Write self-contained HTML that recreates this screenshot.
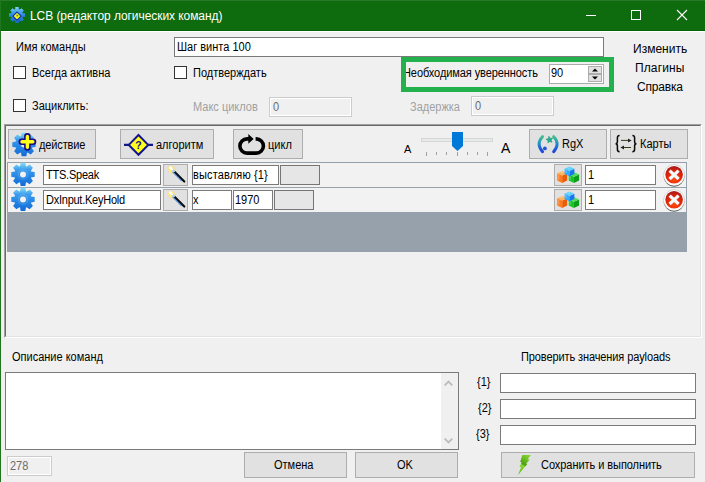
<!DOCTYPE html>
<html lang="ru">
<head>
<meta charset="utf-8">
<title>LCB (редактор логических команд)</title>
<style>
html,body{margin:0;padding:0;}
body{width:705px;height:482px;overflow:hidden;background:#f0f0f0;position:relative;
  font-family:"Liberation Sans",sans-serif;font-size:11px;line-height:13px;color:#000;}
.a{position:absolute;box-sizing:border-box;}
.t{position:absolute;white-space:nowrap;font-size:12px;line-height:12px;transform:scaleX(0.9167);transform-origin:0 0;}
.g{color:#a0a0a0;}
.s12{font-size:12px;line-height:14px;transform:none;}
.in{position:absolute;box-sizing:border-box;border:1px solid #7a7a7a;background:#fff;}
.dis{position:absolute;box-sizing:border-box;border:1px solid #ccc;background:#f0f0f0;box-shadow:inset 0 0 0 1px #fff;}
.btn{position:absolute;box-sizing:border-box;border:1px solid #adadad;background:#e1e1e1;}
.cb{position:absolute;box-sizing:border-box;width:13px;height:13px;border:1px solid #333;background:#fff;}
svg{position:absolute;overflow:visible;}
</style>
</head>
<body>
<!-- title bar -->
<div class="a" id="tb" style="left:0;top:0;width:705px;height:31px;background:#0e6b0e;border-top:1px solid #277a27;border-bottom:1px solid #056105;"></div>
<div class="a" style="left:0;top:31px;width:705px;height:1px;background:#fff;"></div>
<div class="a" style="left:0;top:0;width:1px;height:482px;background:#1f761f;"></div>
<div class="t s12" style="left:30px;top:9px;color:#fff;letter-spacing:-0.07px;">LCB (редактор логических команд)</div>
<!-- window buttons -->
<svg style="left:580px;top:5px" width="120" height="22" viewBox="580 5 120 22">
  <path d="M586 15.5H596" stroke="#fff" stroke-width="1" fill="none"/>
  <rect x="631.5" y="10.5" width="9" height="9" stroke="#fff" stroke-width="1" fill="none"/>
  <path d="M677 10L687 20M687 10L677 20" stroke="#fff" stroke-width="1.1" fill="none"/>
</svg>
<!-- app icon -->
<svg style="left:9px;top:7px" width="16" height="16" viewBox="-12 -12 24 24">
  <defs><linearGradient id="ga" gradientUnits="userSpaceOnUse" x1="0" y1="-12" x2="0" y2="12"><stop offset="0" stop-color="#7fd0f2"/><stop offset="0.45" stop-color="#2f8fe6"/><stop offset="1" stop-color="#1668d2"/></linearGradient></defs>
  <path d="M-2.80 -8.76L-2.50 -12.00L2.50 -12.00L2.80 -8.76A9.2 9.2 0 0 1 4.22 -8.18L6.72 -10.25L10.25 -6.72L8.18 -4.22A9.2 9.2 0 0 1 8.76 -2.80L12.00 -2.50L12.00 2.50L8.76 2.80A9.2 9.2 0 0 1 8.18 4.22L10.25 6.72L6.72 10.25L4.22 8.18A9.2 9.2 0 0 1 2.80 8.76L2.50 12.00L-2.50 12.00L-2.80 8.76A9.2 9.2 0 0 1 -4.22 8.18L-6.72 10.25L-10.25 6.72L-8.18 4.22A9.2 9.2 0 0 1 -8.76 2.80L-12.00 2.50L-12.00 -2.50L-8.76 -2.80A9.2 9.2 0 0 1 -8.18 -4.22L-10.25 -6.72L-6.72 -10.25L-4.22 -8.18A9.2 9.2 0 0 1 -2.80 -8.76Z" fill="url(#ga)"/>
  <path d="M0 -4.4L6.1 1.7L0 7.8L-6.1 1.7Z" fill="#f0ff14" stroke="#1a2a9c" stroke-width="1.6"/>
  <path d="M-1.2 0.6Q0 -0.8 1.2 0.6Q1.2 1.8 0 2.6" stroke="#3c4890" stroke-width="1.2" fill="none"/>
</svg>

<!-- top form -->
<div class="t" style="left:16px;top:41px;">Имя команды</div>
<div class="in" style="left:174px;top:37px;width:430px;height:20px;"></div>
<div class="t" style="left:177px;top:41px;">Шаг винта 100</div>

<div class="cb" style="left:13px;top:66px;"></div>
<div class="t" style="left:32px;top:67px;">Всегда активна</div>
<div class="cb" style="left:174px;top:66px;"></div>
<div class="t" style="left:193px;top:67px;">Подтверждать</div>

<div class="cb" style="left:13px;top:99px;"></div>
<div class="t" style="left:32px;top:100px;">Зациклить:</div>
<div class="t g" style="left:193px;top:101px;">Макс циклов</div>
<div class="dis" style="left:269px;top:97px;width:83px;height:20px;"></div>
<div class="t g" style="left:273px;top:101px;color:#6d6d6d;">0</div>
<div class="t g" style="left:410px;top:101px;">Задержка</div>
<div class="dis" style="left:471px;top:96px;width:83px;height:20px;"></div>
<div class="t g" style="left:475px;top:100px;color:#6d6d6d;">0</div>

<!-- confidence -->
<div class="t" style="left:403px;top:67px;letter-spacing:-0.087px;">Необходимая уверенность</div>
<div class="in" style="left:549px;top:64px;width:55px;height:20px;border-color:#ababab;"></div>
<div class="t" style="left:551px;top:67px;">90</div>
<div class="btn" style="left:588px;top:66px;width:14px;height:8px;"></div>
<div class="btn" style="left:588px;top:74px;width:14px;height:8px;"></div>
<svg style="left:588px;top:66px" width="15" height="16" viewBox="0 0 15 16"><path d="M4 5.6L7 2.4L10 5.6Z M4 10.4L7 13.6L10 10.4Z" fill="#000"/></svg>
<div class="a" style="left:401px;top:57px;width:213px;height:35px;border:5px solid #22b14c;"></div>

<div class="t s12" style="left:633px;top:42px;">Изменить</div>
<div class="t s12" style="left:635px;top:61px;letter-spacing:0.12px;">Плагины</div>
<div class="t s12" style="left:637px;top:80px;letter-spacing:-0.2px;">Справка</div>

<!-- main panel -->
<div class="a" style="left:4px;top:124px;width:698px;height:214px;border-top:1px solid #a0a0a0;border-left:1px solid #a0a0a0;border-right:1px solid #fff;border-bottom:1px solid #fff;"></div>
<div class="a" style="left:5px;top:125px;width:696px;height:212px;border-top:1px solid #696969;border-left:1px solid #696969;border-right:1px solid #e3e3e3;border-bottom:1px solid #e3e3e3;"></div>

<!-- toolbar buttons -->
<div class="btn" style="left:8px;top:129px;width:88px;height:30px;"></div>
<div class="t" style="left:39px;top:139px;letter-spacing:-0.15px;">действие</div>
<div class="btn" style="left:120px;top:129px;width:94px;height:30px;"></div>
<div class="t" style="left:156px;top:139px;">алгоритм</div>
<div class="btn" style="left:233px;top:129px;width:70px;height:30px;"></div>
<div class="t" style="left:268px;top:139px;">цикл</div>
<div class="btn" style="left:529px;top:129px;width:78px;height:30px;"></div>
<div class="t" style="left:562px;top:138px;">RgX</div>
<div class="btn" style="left:610px;top:129px;width:78px;height:30px;"></div>
<div class="t" style="left:640px;top:138px;">Карты</div>

<!-- slider -->
<div class="t" style="left:404px;top:143px;font-size:11px;transform:none;">A</div>
<div class="t" style="left:501px;top:140px;font-size:14px;line-height:16px;transform:none;">A</div>
<div class="a" style="left:421px;top:138px;width:72px;height:4px;border:1px solid #d6d6d6;background:#e7eaea;"></div>
<svg style="left:452px;top:132px" width="11" height="19" viewBox="0 0 11 19"><path d="M0 0H11V14L5.5 19L0 14Z" fill="#0078d7"/></svg>
<svg style="left:420px;top:152px" width="80" height="5" viewBox="420 152 80 5"><path d="M426.5 152v4M436.5 152v3M446.5 152v3M457.5 152v4M467.5 152v3M477.5 152v3M487.5 152v4" stroke="#a0a0a0" stroke-width="1" fill="none"/></svg>

<!-- rows area -->
<div class="a" style="left:7px;top:162px;width:680px;height:90px;background:#97a1ab;"></div>
<div class="a" style="left:8px;top:163px;width:678px;height:24px;background:#f2f2f2;"></div>
<div class="a" style="left:8px;top:188px;width:678px;height:24px;background:#f2f2f2;"></div>

<!-- row 1 -->
<div class="in" style="left:43px;top:165px;width:118px;height:20px;"></div>
<div class="t" style="left:46px;top:169px;letter-spacing:-0.25px;">TTS.Speak</div>
<div class="btn" style="left:163px;top:164px;width:25px;height:22px;"></div>
<div class="in" style="left:192px;top:165px;width:87px;height:20px;"></div>
<div class="t" style="left:193px;top:169px;letter-spacing:0.16px;">выставляю {1}</div>
<div class="btn" style="left:280px;top:165px;width:40px;height:20px;border-color:#767676;background:#e6e6e6;"></div>
<div class="btn" style="left:554px;top:164px;width:28px;height:22px;"></div>
<div class="in" style="left:585px;top:165px;width:71px;height:20px;"></div>
<div class="t" style="left:588px;top:169px;">1</div>

<!-- row 2 -->
<div class="in" style="left:43px;top:190px;width:118px;height:20px;"></div>
<div class="t" style="left:46px;top:194px;letter-spacing:-0.27px;">DxInput.KeyHold</div>
<div class="btn" style="left:163px;top:189px;width:25px;height:22px;"></div>
<div class="in" style="left:192px;top:190px;width:40px;height:20px;"></div>
<div class="t" style="left:193px;top:194px;">x</div>
<div class="in" style="left:233px;top:190px;width:40px;height:20px;"></div>
<div class="t" style="left:235px;top:194px;">1970</div>
<div class="btn" style="left:274px;top:190px;width:40px;height:20px;border-color:#767676;background:#e6e6e6;"></div>
<div class="btn" style="left:554px;top:189px;width:28px;height:22px;"></div>
<div class="in" style="left:585px;top:190px;width:71px;height:20px;"></div>
<div class="t" style="left:588px;top:194px;">1</div>

<!-- bottom -->
<div class="t" style="left:12px;top:351px;">Описание команд</div>
<div class="in" style="left:5px;top:372px;width:454px;height:78px;"></div>
<div class="a" style="left:441px;top:373px;width:17px;height:76px;background:#f0f0f0;"></div>
<svg style="left:441px;top:373px" width="17" height="76" viewBox="0 0 17 76"><path d="M3.7 12.4L7.5 8.6L11.3 12.4M3.7 65.6L7.5 69.4L11.3 65.6" stroke="#bdbdbd" stroke-width="1.9" fill="none"/></svg>
<div class="dis" style="left:7px;top:456px;width:45px;height:20px;"></div>
<div class="t" style="left:10px;top:460px;color:#6d6d6d;">278</div>
<div class="btn" style="left:244px;top:452px;width:103px;height:26px;"></div>
<div class="t" style="left:274px;top:459px;">Отмена</div>
<div class="btn" style="left:355px;top:452px;width:103px;height:26px;"></div>
<div class="t" style="left:397px;top:459px;">OK</div>

<div class="t" style="left:521px;top:351px;letter-spacing:-0.113px;">Проверить значения payloads</div>
<div class="t" style="left:477px;top:376px;">{1}</div>
<div class="in" style="left:500px;top:373px;width:196px;height:20px;"></div>
<div class="t" style="left:478px;top:402px;">{2}</div>
<div class="in" style="left:500px;top:399px;width:196px;height:20px;"></div>
<div class="t" style="left:476px;top:428px;">{3}</div>
<div class="in" style="left:500px;top:425px;width:196px;height:20px;"></div>
<div class="btn" style="left:501px;top:452px;width:194px;height:26px;"></div>
<div class="t" style="left:541px;top:459px;letter-spacing:-0.06px;">Сохранить и выполнить</div>

<!-- icons -->
<svg width="0" height="0" style="left:0;top:0"><defs>
<linearGradient id="gg" gradientUnits="userSpaceOnUse" x1="0" y1="-12" x2="0" y2="12"><stop offset="0" stop-color="#8be3f7"/><stop offset="0.3" stop-color="#3b9cec"/><stop offset="0.6" stop-color="#2485e4"/><stop offset="1" stop-color="#1269d6"/></linearGradient>
<linearGradient id="gp" gradientUnits="userSpaceOnUse" x1="0" y1="135" x2="0" y2="153"><stop offset="0" stop-color="#4cc878"/><stop offset="0.4" stop-color="#2a9ac0"/><stop offset="0.75" stop-color="#1f5fdc"/><stop offset="1" stop-color="#1a3fd0"/></linearGradient>
<radialGradient id="gr" cx="0.5" cy="0.75" r="0.75"><stop offset="0" stop-color="#ff4a10"/><stop offset="0.5" stop-color="#e82808"/><stop offset="1" stop-color="#a81818"/></radialGradient>
<radialGradient id="gw" cx="0.5" cy="0.5" r="0.5"><stop offset="0" stop-color="#fffad0"/><stop offset="0.4" stop-color="#fff250"/><stop offset="0.7" stop-color="#ffe468" stop-opacity="0.65"/><stop offset="1" stop-color="#ffb890" stop-opacity="0"/></radialGradient>
<linearGradient id="gl" x1="0.7" y1="0" x2="0.3" y2="1"><stop offset="0" stop-color="#82d232"/><stop offset="0.3" stop-color="#64b61e"/><stop offset="0.48" stop-color="#4c9c12"/><stop offset="0.58" stop-color="#86d630"/><stop offset="1" stop-color="#62bc1c"/></linearGradient>
</defs></svg>

<!-- action button icon: gear + plus -->
<svg style="left:0;top:0" width="705" height="482" viewBox="0 0 705 482">
  <g transform="translate(24 144.5)"><path d="M-3.00 -8.17L-2.30 -11.70L2.30 -11.70L3.00 -8.17A8.7 8.7 0 0 1 3.65 -7.90L6.65 -9.90L9.90 -6.65L7.90 -3.65A8.7 8.7 0 0 1 8.17 -3.00L11.70 -2.30L11.70 2.30L8.17 3.00A8.7 8.7 0 0 1 7.90 3.65L9.90 6.65L6.65 9.90L3.65 7.90A8.7 8.7 0 0 1 3.00 8.17L2.30 11.70L-2.30 11.70L-3.00 8.17A8.7 8.7 0 0 1 -3.65 7.90L-6.65 9.90L-9.90 6.65L-7.90 3.65A8.7 8.7 0 0 1 -8.17 3.00L-11.70 2.30L-11.70 -2.30L-8.17 -3.00A8.7 8.7 0 0 1 -7.90 -3.65L-9.90 -6.65L-6.65 -9.90L-3.65 -7.90A8.7 8.7 0 0 1 -3.00 -8.17ZM3.00 0A3.00 3.00 0 1 0 -3.00 0A3.00 3.00 0 1 0 3.00 0Z" fill="url(#gg)" fill-rule="evenodd"/></g>
  <path d="M27.4 136.2V147.4M21.8 141.8H33" stroke="#1c0c84" stroke-width="6.6" stroke-linecap="round" fill="none"/>
  <path d="M27.4 136.4V147.2M22 141.8H32.8" stroke="#ffff1a" stroke-width="3.4" stroke-linecap="round" fill="none"/>

  <!-- row gears -->
  <g transform="translate(23 174.4)"><path d="M-3.00 -8.17L-2.30 -11.70L2.30 -11.70L3.00 -8.17A8.7 8.7 0 0 1 3.65 -7.90L6.65 -9.90L9.90 -6.65L7.90 -3.65A8.7 8.7 0 0 1 8.17 -3.00L11.70 -2.30L11.70 2.30L8.17 3.00A8.7 8.7 0 0 1 7.90 3.65L9.90 6.65L6.65 9.90L3.65 7.90A8.7 8.7 0 0 1 3.00 8.17L2.30 11.70L-2.30 11.70L-3.00 8.17A8.7 8.7 0 0 1 -3.65 7.90L-6.65 9.90L-9.90 6.65L-7.90 3.65A8.7 8.7 0 0 1 -8.17 3.00L-11.70 2.30L-11.70 -2.30L-8.17 -3.00A8.7 8.7 0 0 1 -7.90 -3.65L-9.90 -6.65L-6.65 -9.90L-3.65 -7.90A8.7 8.7 0 0 1 -3.00 -8.17ZM3.00 0A3.00 3.00 0 1 0 -3.00 0A3.00 3.00 0 1 0 3.00 0Z" fill="url(#gg)" fill-rule="evenodd"/><circle r="4.6" fill="none" stroke="#fff" stroke-opacity="0.13" stroke-width="1.6"/></g>
  <g transform="translate(23 199.4)"><path d="M-3.00 -8.17L-2.30 -11.70L2.30 -11.70L3.00 -8.17A8.7 8.7 0 0 1 3.65 -7.90L6.65 -9.90L9.90 -6.65L7.90 -3.65A8.7 8.7 0 0 1 8.17 -3.00L11.70 -2.30L11.70 2.30L8.17 3.00A8.7 8.7 0 0 1 7.90 3.65L9.90 6.65L6.65 9.90L3.65 7.90A8.7 8.7 0 0 1 3.00 8.17L2.30 11.70L-2.30 11.70L-3.00 8.17A8.7 8.7 0 0 1 -3.65 7.90L-6.65 9.90L-9.90 6.65L-7.90 3.65A8.7 8.7 0 0 1 -8.17 3.00L-11.70 2.30L-11.70 -2.30L-8.17 -3.00A8.7 8.7 0 0 1 -7.90 -3.65L-9.90 -6.65L-6.65 -9.90L-3.65 -7.90A8.7 8.7 0 0 1 -3.00 -8.17ZM3.00 0A3.00 3.00 0 1 0 -3.00 0A3.00 3.00 0 1 0 3.00 0Z" fill="url(#gg)" fill-rule="evenodd"/><circle r="4.6" fill="none" stroke="#fff" stroke-opacity="0.13" stroke-width="1.6"/></g>

  <!-- algorithm icon -->
  <path d="M124 144.8H129M148 144.8H153" stroke="#14148c" stroke-width="2.2" fill="none"/>
  <path d="M138.5 135L148.2 144.9L138.5 154.8L128.8 144.9Z" fill="#ffff1e" stroke="#14148c" stroke-width="2"/>
  <text x="138.5" y="148.8" font-family="Liberation Sans, sans-serif" font-size="10.5" font-weight="bold" text-anchor="middle" fill="#14148c">?</text>

  <!-- loop icon -->
  <path d="M250 138.9H247A7.1 7.1 0 0 0 247 153.1H256.3A7.1 7.1 0 0 0 256.3 138.9H255.6" stroke="#000" stroke-width="3.6" fill="none"/>
  <path d="M248.3 134.1L253.6 138.9L248.3 143.7Z" fill="#000"/>

  <!-- RgX icon -->
  <path d="M542.6 136.6Q535.6 144.2 542.6 151.8" stroke="url(#gp)" stroke-width="2.9" fill="none" stroke-linecap="round"/>
  <path d="M553.6 136.6Q560.6 144.2 553.6 151.8" stroke="url(#gp)" stroke-width="2.9" fill="none" stroke-linecap="round"/>
  <circle cx="544.9" cy="148.4" r="1.9" fill="#1f55d8"/>
  <path d="M548.9 136.3L550.2 138.4L552.7 138.1L551.1 140.0L552.1 142.3L549.8 141.4L547.9 143.0L548.1 140.6L545.9 139.3L548.3 138.7Z" fill="#22b08c" stroke="#169878" stroke-width="0.6"/>

  <!-- maps icon -->
  <path d="M619.6 135.6Q617.4 135.6 617.4 137.8V141.4Q617.4 143.6 615.6 143.7Q617.4 143.8 617.4 146V149.6Q617.4 151.8 619.6 151.8" stroke="#0a0a0a" stroke-width="1.5" fill="none"/>
  <path d="M632.4 135.6Q634.6 135.6 634.6 137.8V141.4Q634.6 143.6 636.4 143.7Q634.6 143.8 634.6 146V149.6Q634.6 151.8 632.4 151.8" stroke="#0a0a0a" stroke-width="1.5" fill="none"/>
  <path d="M621 140.4H629" stroke="#3a3a14" stroke-width="1" fill="none"/><path d="M628 138.4L631.6 140.4L628 142.4Z" fill="#222"/>
  <path d="M623 147.5H631" stroke="#3a3a14" stroke-width="1" fill="none"/><path d="M624 145.5L620.4 147.5L624 149.5Z" fill="#222"/>

  <!-- wands -->
  <g>
    <ellipse cx="171.8" cy="169.8" rx="5.4" ry="4.2" fill="url(#gw)" transform="rotate(45 171.8 169.8)"/>
    <path d="M172 169.2L184.3 181.6" stroke="#0a0a0a" stroke-width="2.1" stroke-linecap="round" fill="none"/>
    <path d="M172.4 171.6L181.6 180.8" stroke="#3f7fd6" stroke-width="1.1" fill="none"/>
    <path d="M170.2 167.4L173.6 170.8" stroke="#ffffff" stroke-width="2.4" stroke-linecap="round" fill="none"/>
    <path d="M172.8 170L174.6 171.8" stroke="#a8c8f0" stroke-width="2.3" fill="none"/>
  </g>
  <g transform="translate(0 25)">
    <ellipse cx="171.8" cy="169.8" rx="5.4" ry="4.2" fill="url(#gw)" transform="rotate(45 171.8 169.8)"/>
    <path d="M172 169.2L184.3 181.6" stroke="#0a0a0a" stroke-width="2.1" stroke-linecap="round" fill="none"/>
    <path d="M172.4 171.6L181.6 180.8" stroke="#3f7fd6" stroke-width="1.1" fill="none"/>
    <path d="M170.2 167.4L173.6 170.8" stroke="#ffffff" stroke-width="2.4" stroke-linecap="round" fill="none"/>
    <path d="M172.8 170L174.6 171.8" stroke="#a8c8f0" stroke-width="2.3" fill="none"/>
  </g>

  <!-- cubes -->
  <g><path d="M557.2 173.2L562.2 175.5L562.2 182.9L557.2 180.6Z" fill="#ff7c1c"/><path d="M562.2 175.5L567.2 173.2L567.2 180.6L562.2 182.9Z" fill="#ee5a08"/><path d="M562.2 170.9L567.2 173.2L562.2 175.5L557.2 173.2Z" fill="#ffb35a"/><path d="M560.0 173.0L562.2 171.8L563.2 172.6Z" fill="#fff0d8" opacity="0.75"/><path d="M557.8 174.2L559.4 175.0L559.4 180.0L557.8 179.2Z" fill="#fff" opacity="0.22"/><path d="M568.7 174.4L573.9 176.7L573.9 182.9L568.7 180.6Z" fill="#16c428"/><path d="M573.9 176.7L579.1 174.4L579.1 180.6L573.9 182.9Z" fill="#0a9e1a"/><path d="M573.9 172.1L579.1 174.4L573.9 176.7L568.7 174.4Z" fill="#52e05a"/><path d="M571.6 174.2L573.9 173.0L574.9 173.8Z" fill="#d8ffd8" opacity="0.75"/><path d="M569.3 175.4L570.9 176.2L570.9 180.0L569.3 179.2Z" fill="#fff" opacity="0.22"/><path d="M564.6 168.8L569.5 171.0L569.5 176.2L564.6 174.0Z" fill="#30acff"/><path d="M569.5 171.0L574.4 168.8L574.4 174.0L569.5 176.2Z" fill="#1a74f2"/><path d="M569.5 166.6L574.4 168.8L569.5 171.0L564.6 168.8Z" fill="#58d0ff"/><path d="M567.3 168.6L569.5 167.5L570.5 168.2Z" fill="#e0f8ff" opacity="0.75"/><path d="M565.2 169.8L566.8 170.6L566.8 173.4L565.2 172.6Z" fill="#fff" opacity="0.22"/></g>
  <g transform="translate(0 25)"><path d="M557.2 173.2L562.2 175.5L562.2 182.9L557.2 180.6Z" fill="#ff7c1c"/><path d="M562.2 175.5L567.2 173.2L567.2 180.6L562.2 182.9Z" fill="#ee5a08"/><path d="M562.2 170.9L567.2 173.2L562.2 175.5L557.2 173.2Z" fill="#ffb35a"/><path d="M560.0 173.0L562.2 171.8L563.2 172.6Z" fill="#fff0d8" opacity="0.75"/><path d="M557.8 174.2L559.4 175.0L559.4 180.0L557.8 179.2Z" fill="#fff" opacity="0.22"/><path d="M568.7 174.4L573.9 176.7L573.9 182.9L568.7 180.6Z" fill="#16c428"/><path d="M573.9 176.7L579.1 174.4L579.1 180.6L573.9 182.9Z" fill="#0a9e1a"/><path d="M573.9 172.1L579.1 174.4L573.9 176.7L568.7 174.4Z" fill="#52e05a"/><path d="M571.6 174.2L573.9 173.0L574.9 173.8Z" fill="#d8ffd8" opacity="0.75"/><path d="M569.3 175.4L570.9 176.2L570.9 180.0L569.3 179.2Z" fill="#fff" opacity="0.22"/><path d="M564.6 168.8L569.5 171.0L569.5 176.2L564.6 174.0Z" fill="#30acff"/><path d="M569.5 171.0L574.4 168.8L574.4 174.0L569.5 176.2Z" fill="#1a74f2"/><path d="M569.5 166.6L574.4 168.8L569.5 171.0L564.6 168.8Z" fill="#58d0ff"/><path d="M567.3 168.6L569.5 167.5L570.5 168.2Z" fill="#e0f8ff" opacity="0.75"/><path d="M565.2 169.8L566.8 170.6L566.8 173.4L565.2 172.6Z" fill="#fff" opacity="0.22"/></g>

  <!-- delete icons -->
  <g id="d1">
    <circle cx="674.1" cy="175.4" r="10.8" fill="#999" opacity="0.5"/><circle cx="674.1" cy="176.5" r="10.2" fill="#2a2a2a" opacity="0.7"/>
    <circle cx="674.1" cy="175.3" r="10.4" fill="#fbfdfd"/>
    <circle cx="674.1" cy="174.8" r="8.8" fill="url(#gr)"/>
    <path d="M669.6 170.6L678.6 179M678.6 170.6L669.6 179" stroke="#f4fafa" stroke-width="3.2" fill="none"/>
  </g>
  <g transform="translate(0 25)">
    <circle cx="674.1" cy="175.4" r="10.8" fill="#999" opacity="0.5"/><circle cx="674.1" cy="176.5" r="10.2" fill="#2a2a2a" opacity="0.7"/>
    <circle cx="674.1" cy="175.3" r="10.4" fill="#fbfdfd"/>
    <circle cx="674.1" cy="174.8" r="8.8" fill="url(#gr)"/>
    <path d="M669.6 170.6L678.6 179M678.6 170.6L669.6 179" stroke="#f4fafa" stroke-width="3.2" fill="none"/>
  </g>

  <!-- lightning -->
  <path d="M522.3 455H530.8L527.6 459.4H529.8L526 463.8H527.6L518 475L521.2 467H519.6L521.6 462H520.2Z" fill="url(#gl)"/>
</svg>
</body>
</html>
